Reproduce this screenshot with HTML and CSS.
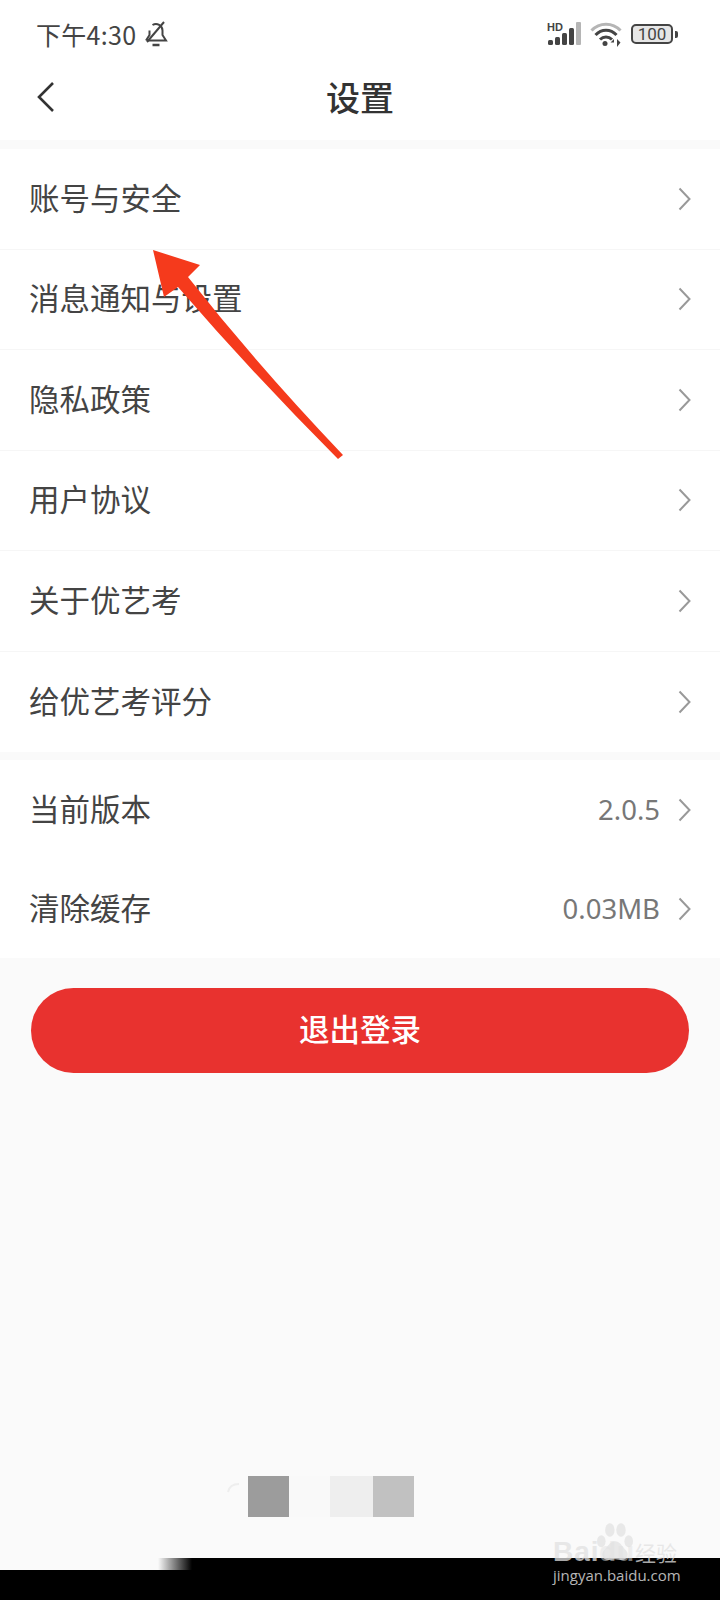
FILE: index.html
```html
<!DOCTYPE html>
<html lang="zh-CN">

<head>
    <meta charset="UTF-8">
    <meta name="viewport" content="width=device-width, initial-scale=1.0">
    <title>设置</title>
    <link rel="stylesheet" href="styles.css">
</head>

<body>
    <div class="page">
        <div class="status-bar">
            <div class="status-left">
                <span class="time">下午4:30</span>
                <svg class="bell" width="24" height="26" viewBox="0 0 24 26" fill="none" stroke="#444" stroke-width="2">
                    <path d="M3 19.500h19l-3.500-5.500v-4.500a6.500 6.500 0 0 0-10-5.500M5.500 9.500v4.500L2 19.500" />
                    <path d="M3 21L20 1" />
                    <path d="M8.500 24h7" stroke-width="2.500" />
                </svg>
            </div>
            <div class="status-right">
                <svg width="36" height="26" viewBox="0 0 36 26">
                    <text x="0" y="10" class="hd">HD</text>
                    <rect x="1" y="19" width="5" height="5" rx="1.500" fill="#444" />
                    <rect x="8" y="16" width="5" height="8" rx="1.500" fill="#444" />
                    <rect x="15" y="12" width="5" height="12" rx="1.500" fill="#444" />
                    <rect x="22" y="7" width="5" height="17" rx="1.500" fill="#444" />
                    <rect x="29" y="1" width="5" height="23" rx="1" fill="#b5b5b5" />
                </svg>
                <svg class="wifi" width="32" height="26" viewBox="0 0 32 26" fill="none">
                    <path d="M1.500 9.500C9.500 1 22.500 1 30.500 9.500" stroke="#b5b5b5" stroke-width="3" />
                    <path d="M5.500 14C11.500 7.500 20.500 7.500 26.500 14" stroke="#444" stroke-width="3" />
                    <path d="M10 18.500C13.500 15 18.500 15 22 18.500" stroke="#444" stroke-width="3" />
                    <circle cx="15" cy="22.500" r="2.500" fill="#444" />
                    <path d="M24 18l-3.500 3.500 3.500 0zM24 18v8M27 18v8l3.500-4.500z" fill="#444" />
                </svg>
                <div class="battery">
                    <span class="battery-box">100</span>
                    <span class="battery-tip"></span>
                </div>
            </div>
        </div>

        <div class="nav-bar">
            <svg class="back" width="20" height="32" viewBox="0 0 20 32" fill="none" stroke="#333" stroke-width="2.600">
                <path d="M17 2L3 16l14 14" />
            </svg>
            <h1>设置</h1>
        </div>

        <div class="group first">
            <div class="row line"><span>账号与安全</span><svg class="more" viewBox="0 0 13 24"><path d="M1.500 1.500L11.500 12 1.500 22.500" /></svg></div>
            <div class="row line"><span>消息通知与设置</span><svg class="more" viewBox="0 0 13 24"><path d="M1.500 1.500L11.500 12 1.500 22.500" /></svg></div>
            <div class="row line"><span>隐私政策</span><svg class="more" viewBox="0 0 13 24"><path d="M1.500 1.500L11.500 12 1.500 22.500" /></svg></div>
            <div class="row line"><span>用户协议</span><svg class="more" viewBox="0 0 13 24"><path d="M1.500 1.500L11.500 12 1.500 22.500" /></svg></div>
            <div class="row line"><span>关于优艺考</span><svg class="more" viewBox="0 0 13 24"><path d="M1.500 1.500L11.500 12 1.500 22.500" /></svg></div>
            <div class="row"><span>给优艺考评分</span><svg class="more" viewBox="0 0 13 24"><path d="M1.500 1.500L11.500 12 1.500 22.500" /></svg></div>
        </div>

        <div class="group second">
            <div class="row short"><span>当前版本</span><em>2.0.5</em><svg class="more" viewBox="0 0 13 24"><path d="M1.500 1.500L11.500 12 1.500 22.500" /></svg></div>
            <div class="row short"><span>清除缓存</span><em>0.03MB</em><svg class="more" viewBox="0 0 13 24"><path d="M1.500 1.500L11.500 12 1.500 22.500" /></svg></div>
        </div>

        <button class="logout">退出登录</button>

        <div class="blur-blocks">
            <svg class="spinner" width="21" height="41" viewBox="0 0 21 41" fill="none" stroke="#eeeeee" stroke-width="2">
                <path d="M1 16C2 11 6 8 12 8" />
            </svg>
            <i class="b1"></i><i class="b2"></i><i class="b3"></i><i class="b4"></i>
        </div>

        <div class="bottom-bar">
            <div class="bottom-top"><span class="fade"></span><span class="solid"></span></div>
            <div class="bottom-main"></div>
        </div>

        <!-- annotation drawn on top of the screenshot -->
        <svg class="arrow" width="720" height="500" viewBox="0 0 720 500">
            <path d="M153 250L200 265 188 277Q258 366 343 455L338 459Q254 375 178 287L164 297z" fill="#f53a1c" />
        </svg>

        <div class="watermark">
            <div class="wm-top">
                <span class="wm-bai">Bai</span>
                <svg class="paw" width="36" height="40" viewBox="0 0 42 46">
                    <ellipse cx="5" cy="22" rx="5" ry="7" />
                    <ellipse cx="15" cy="9" rx="5.500" ry="8" />
                    <ellipse cx="28" cy="9" rx="5.500" ry="8" />
                    <ellipse cx="37" cy="22" rx="5" ry="7" />
                    <path d="M21 22c6 0 9 7 13 11 4 5 1 11-5 11-3 0-5-1-8-1s-5 1-8 1c-6 0-9-6-5-11 4-4 7-11 13-11z" />
                </svg>
                <span class="wm-du">du</span>
                <span class="wm-jy">经验</span>
            </div>
            <div class="wm-url">jingyan.baidu.com</div>
        </div>
    </div>
</body>

</html>
```

FILE: styles.css
```css
* {
    box-sizing: border-box;
}

body {
    margin: 0;
    font-family: "Noto Sans CJK SC", "Noto Sans", sans-serif;
    background: #fafafa;
}

.page {
    position: relative;
    width: 720px;
    height: 1600px;
    overflow: hidden;
    background: #fafafa;
    display: flex;
    flex-direction: column;
}

.status-bar {
    height: 68px;
    background: #fff;
    display: flex;
    justify-content: space-between;
    align-items: center;
    padding: 0 42px 0 36px;
}

.status-left {
    display: flex;
    align-items: center;
    gap: 8px;
}

.time {
    font-family: "Noto Sans CJK SC", sans-serif;
    font-size: 25px;
    line-height: 32px;
    letter-spacing: 0.300px;
    color: #444;
}

.status-right {
    display: flex;
    align-items: center;
    gap: 9px;
}

.wifi {
    margin-left: -2px;
}

.hd {
    font-family: "Liberation Sans", sans-serif;
    font-size: 11px;
    font-weight: bold;
    fill: #444;
}

.battery {
    display: flex;
    align-items: center;
    gap: 2px;
}

.battery-box {
    width: 42px;
    height: 20px;
    border: 2px solid #444;
    border-radius: 5px;
    background: #e6e6e6;
    font-family: "Roboto", sans-serif;
    font-size: 17px;
    line-height: 16px;
    text-align: center;
    color: #444;
}

.battery-tip {
    width: 3px;
    height: 7px;
    background: #444;
    border-radius: 0 2px 2px 0;
}

.nav-bar {
    height: 72px;
    padding-bottom: 14px;
    background: #fff;
    display: flex;
    align-items: center;
    justify-content: center;
    position: relative;
}

.nav-bar h1 {
    margin: 0;
    font-size: 34px;
    font-weight: 500;
    line-height: 44px;
    color: #333;
}

.back {
    position: absolute;
    left: 36px;
    top: 13px;
}

.group {
    background: #fff;
}

.group.first {
    margin-top: 9px;
}

.group.second {
    margin-top: 8px;
}

.row {
    height: 100.500px;
    padding: 0 29px 0 29px;
    display: flex;
    align-items: center;
    font-size: 30.500px;
    color: #444;
}

.row span {
    flex: 1;
    margin-bottom: 4px;
}

.row.line {
    border-bottom: 1px solid #f6f6f6;
}

.row.short {
    height: 99px;
}

.row em {
    font-family: "Noto Sans", sans-serif;
    font-style: normal;
    font-size: 27.500px;
    color: #777;
    margin-right: 18px;
}

.more {
    width: 13px;
    height: 24px;
    fill: none;
    stroke: #999;
    stroke-width: 2;
}

.logout {
    display: block;
    margin: 30px 31px 0;
    height: 85px;
    padding: 0 0 5px;
    border: none;
    border-radius: 43px;
    background: #e8322f;
    color: #fff;
    font-family: inherit;
    font-size: 30.500px;
    font-weight: 500;
}

.blur-blocks {
    display: flex;
    margin: 403px 0 0 227px;
    height: 41px;
}

.blur-blocks i {
    display: block;
    height: 41px;
}

.b1 {
    width: 41px;
    background: #9c9c9c;
}

.b2 {
    width: 41px;
    background: #f9f9f9;
}

.b3 {
    width: 43px;
    background: #eeeeee;
}

.b4 {
    width: 41px;
    background: #c1c1c1;
}

.bottom-bar {
    margin-top: 41px;
    flex: 1;
    display: flex;
    flex-direction: column;
}

.bottom-top {
    height: 12px;
    display: flex;
}

.bottom-top .fade {
    margin-left: 158px;
    width: 34px;
    background: linear-gradient(to right, #fafafa, #000);
}

.bottom-top .solid {
    flex: 1;
    background: #000;
}

.bottom-main {
    flex: 1;
    background: #000;
}

.arrow {
    position: absolute;
    left: 0;
    top: 0;
}

.watermark {
    position: absolute;
    left: 552px;
    top: 1522px;
    width: 130px;
    color: rgba(255, 255, 255, 0.72);
}

.wm-top {
    position: relative;
    height: 42px;
}

.wm-bai,
.wm-du {
    position: absolute;
    top: 16px;
    font-family: "Liberation Sans", sans-serif;
    font-size: 28px;
    line-height: 28px;
    font-weight: bold;
    letter-spacing: 1px;
    color: rgba(225, 225, 225, 0.75);
}

.wm-bai {
    left: 1px;
}

.wm-du {
    left: 47px;
    color: rgba(225, 225, 225, 0.5);
}

.paw {
    position: absolute;
    left: 45px;
    top: 0;
    fill: rgba(225, 225, 225, 0.75);
}

.wm-jy {
    position: absolute;
    left: 83px;
    top: 17px;
    font-size: 21px;
    line-height: 26px;
    white-space: nowrap;
    color: rgba(225, 225, 225, 0.75);
}

.wm-url {
    font-family: "Open Sans", sans-serif;
    font-size: 15px;
    line-height: 22px;
    white-space: nowrap;
    margin-left: 1px;
}
```
